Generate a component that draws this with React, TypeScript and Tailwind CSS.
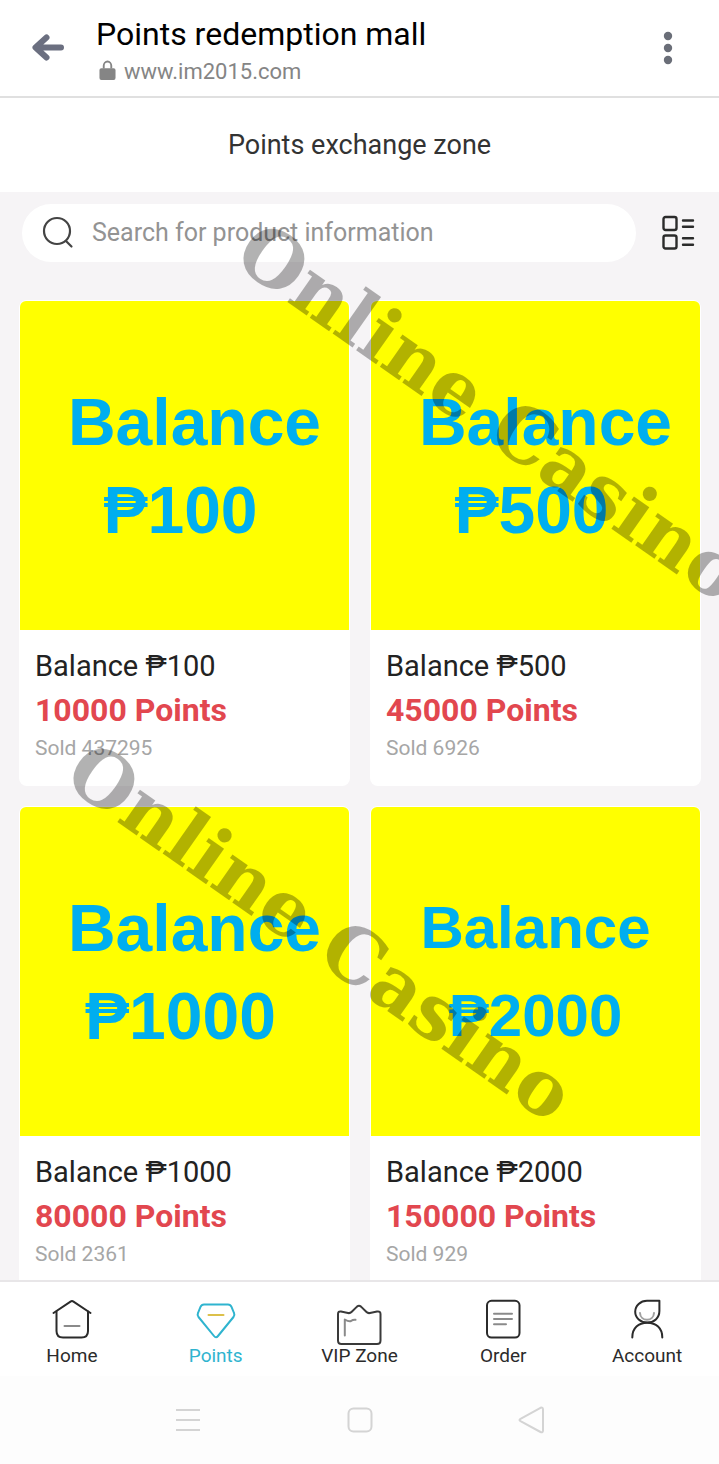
import React, { useState } from 'react';

type Product = {
  amount: string;
  points: number;
  sold: number;
  compact?: boolean;
};

const products: Product[] = [
  { amount: '₱100', points: 10000, sold: 437295 },
  { amount: '₱500', points: 45000, sold: 6926 },
  { amount: '₱1000', points: 80000, sold: 2361 },
  { amount: '₱2000', points: 150000, sold: 929, compact: true },
];

const HomeIcon = () => (
  <svg viewBox="0 0 48 48" className="size-12" fill="none" stroke="#2b2b2b" strokeWidth="2" strokeLinecap="round" strokeLinejoin="round">
    <path d="M5.5 15 L22.5 3.6 Q24 2.6 25.5 3.6 L42.5 15" />
    <path d="M8.5 13.5 V33 Q8.5 39.5 15 39.5 H33.5 Q40 39.5 40 33 V13.5" />
    <path d="M16.5 28 H31.5" stroke="#8a8a8a" />
  </svg>
);

const PointsIcon = () => (
  <svg viewBox="0 0 48 48" className="size-12" fill="none" stroke="#2fb4cf" strokeWidth="2" strokeLinecap="round" strokeLinejoin="round">
    <path d="M12 6.5 H36 Q38.5 6.5 39.5 8.8 L42 15 Q43 17 41.5 19 L26 38 Q24 40.5 22 38 L6.5 19 Q5 17 6 15 L8.5 8.8 Q9.5 6.5 12 6.5 Z" />
    <path d="M16.5 17 H31.5" stroke="#dcc04a" />
  </svg>
);

const VipIcon = () => (
  <svg viewBox="0 0 48 48" className="size-12" fill="none" stroke="#3a3a3a" strokeWidth="2" strokeLinecap="round" strokeLinejoin="round">
    <path d="M3 16 Q3 13 6 13.6 L13 15 Q15 15.5 16.5 14 L22 8.6 Q24 7 26 8.6 L31.5 14 Q33 15.5 35 15 L42 13.6 Q45.5 13 45.5 16 V42.5 Q45.5 46 42 46 H6.5 Q3 46 3 42.5 Z" />
    <path d="M9.8 37.5 V21.5 Q14 24 16 23 Q18 21.5 20.5 21.8" stroke="#8a8a8a" />
  </svg>
);

const OrderIcon = () => (
  <svg viewBox="0 0 48 48" className="size-12" fill="none" stroke="#2b2b2b" strokeWidth="2" strokeLinecap="round">
    <rect x="8" y="2.8" width="32.5" height="36.7" rx="4.5" />
    <path d="M15 15.7 H33 M15 21 H33 M15 26.2 H27" stroke="#8a8a8a" />
  </svg>
);

const AccountIcon = () => (
  <svg viewBox="0 0 48 48" className="size-12" fill="none" stroke="#2b2b2b" strokeWidth="2" strokeLinecap="round" strokeLinejoin="round">
    <path d="M24 2.8 H36.4 V13 C36.4 20 31 24.6 24.3 24.6 C17.5 24.6 12.2 20 12.2 13.8 C12.2 7.5 17.5 2.8 24 2.8 Z" />
    <path d="M17 15 C17.5 24 30.5 24 31 15" stroke="#a0a0a0" />
    <path d="M9.3 39.5 C9.3 30 15.5 24.8 24.3 24.8 C33 24.8 39.3 30 39.3 39.5" />
  </svg>
);

const tabs = [
  { label: 'Home', Icon: HomeIcon },
  { label: 'Points', Icon: PointsIcon },
  { label: 'VIP Zone', Icon: VipIcon },
  { label: 'Order', Icon: OrderIcon },
  { label: 'Account', Icon: AccountIcon },
];

const ProductCard = ({ product }: { product: Product }) => (
  <article className="bg-white rounded-lg p-px pb-6">
    {product.compact ? (
      <div className="aspect-square bg-[#ffff00] rounded-t-md flex flex-col items-center justify-center text-[#00aeef] font-bold font-['Liberation_Sans',Arial,sans-serif] text-[60px] leading-[88px]">
        <span>Balance</span>
        <span>{product.amount}</span>
      </div>
    ) : (
      <div className="aspect-square bg-[#ffff00] rounded-t-md flex flex-col items-center justify-center pr-2 text-[#00aeef] font-bold font-['Liberation_Sans',Arial,sans-serif] text-[66px] leading-[88px]">
        <span className="pl-7">Balance</span>
        <span>{product.amount}</span>
      </div>
    )}
    <div className="px-[15px] pt-4">
      <h2 className="text-[29px] leading-10 text-[#222]">Balance {product.amount}</h2>
      <p className="text-[32px] leading-[48px] font-bold text-[#e2474f]">{product.points} Points</p>
      <p className="text-[21px] leading-7 text-[#a6a6a6]">Sold {product.sold}</p>
    </div>
  </article>
);

const App = () => {
  const [query, setQuery] = useState('');
  const [active, setActive] = useState('Points');

  return (
    <div className="relative h-screen flex flex-col overflow-hidden bg-[#f6f4f6] font-[Roboto,sans-serif]">
      {/* Browser bar */}
      <header className="shrink-0 flex items-center bg-white border-b-2 border-[#e0e0e0] pl-7 pr-[31px] py-[10px]">
        <button aria-label="Back" className="w-[68px] shrink-0">
          <svg viewBox="0 0 40 40" className="size-10" fill="none" stroke="#6b6f80" strokeWidth="6" strokeLinecap="round" strokeLinejoin="round">
            <path d="M18.5 9.5 L7.5 19.5 L18.5 29.5 M8.5 19.5 H33" />
          </svg>
        </button>
        <div className="flex-1 min-w-0">
          <h1 className="text-[32px] leading-[48px] text-black">Points redemption mall</h1>
          <div className="flex items-center gap-2 pl-[3px] text-[22px] leading-7 text-[#858585]">
            <svg viewBox="0 0 18 22" className="w-[17px] h-[21px] mb-1">
              <path d="M5 9 V6 A4 4.5 0 0 1 13 6 V9" fill="none" stroke="#858585" strokeWidth="2" />
              <rect x="0.5" y="8.5" width="17" height="12.5" rx="2" fill="#858585" />
            </svg>
            <span>www.im2015.com</span>
          </div>
        </div>
        <button aria-label="More" className="w-10 flex justify-center">
          <svg viewBox="0 0 12 36" className="w-3 h-9" fill="#6a6e78">
            <circle cx="6" cy="6" r="4.2" />
            <circle cx="6" cy="18" r="4.2" />
            <circle cx="6" cy="30" r="4.2" />
          </svg>
        </button>
      </header>

      <div className="shrink-0 bg-white py-6 text-center text-[27px] leading-[46px] text-[#333]">Points exchange zone</div>

      <main className="flex-1 min-h-0 overflow-hidden">
        <div className="flex items-center gap-6 pl-[22px] pr-[23px] pt-3">
          <label className="flex-1 h-[58px] flex items-center gap-4 bg-white rounded-full pl-5">
            <svg viewBox="0 0 34 34" className="w-[34px] h-[34px]" fill="none" stroke="#444" strokeWidth="2.2" strokeLinecap="round">
              <circle cx="15" cy="15" r="13" />
              <path d="M24 25 L29.5 30.5" />
            </svg>
            <input
              value={query}
              onChange={(e) => setQuery(e.target.value)}
              placeholder="Search for product information"
              aria-label="Search for product information"
              className="flex-1 min-w-0 text-[25px] leading-8 text-[#333] outline-none placeholder:text-[#939393]"
            />
          </label>
          <button aria-label="List view">
            <svg viewBox="0 0 36 40" className="w-9 h-10" fill="none" stroke="#2b2b2b" strokeWidth="2.4" strokeLinecap="round">
              <rect x="3.5" y="4" width="13" height="13" rx="2" />
              <rect x="3.5" y="22.5" width="13" height="13" rx="2" />
              <path d="M23 7.5 H33 M23 13.8 H33 M23 25.2 H33 M23 31.8 H33" />
            </svg>
          </button>
        </div>

        <div className="grid grid-cols-2 gap-5 pl-[19px] pr-[18px] pt-[38px]">
          {products.map((product) => (
            <ProductCard key={product.amount} product={product} />
          ))}
        </div>
      </main>

      <nav className="shrink-0 grid grid-cols-5 bg-white border-t-2 border-[#e8e6e8] pt-4 pb-[10px]">
        {tabs.map(({ label, Icon }) => (
          <button key={label} onClick={() => setActive(label)} className="flex flex-col items-center">
            <Icon />
            <span className={label === active ? 'text-[19px] leading-5 text-[#2fb4cf]' : 'text-[19px] leading-5 text-[#2b2b2b]'}>
              {label}
            </span>
          </button>
        ))}
      </nav>

      {/* Android system keys */}
      <div className="shrink-0 h-[88px] flex items-center justify-center gap-[132px] bg-[#fdfdfd]">
        <button aria-label="Recent apps">
          <svg viewBox="0 0 40 40" className="size-10" stroke="#d4d4d4" strokeWidth="2">
            <path d="M8 10 H32 M8 20 H32 M8 30 H32" />
          </svg>
        </button>
        <button aria-label="Home screen">
          <svg viewBox="0 0 40 40" className="size-10" fill="none" stroke="#d4d4d4" strokeWidth="2">
            <rect x="8.5" y="8.5" width="23" height="23" rx="5" />
          </svg>
        </button>
        <button aria-label="System back">
          <svg viewBox="0 0 40 40" className="size-10" fill="none" stroke="#d4d4d4" strokeWidth="2" strokeLinejoin="round">
            <path d="M8.5 18.8 L28.5 7.8 Q31 7 31 9.5 V30.5 Q31 33 28.5 32 L8.5 21.2 Q6.5 20 8.5 18.8 Z" />
          </svg>
        </button>
      </div>

      {/* Watermarks */}
      <div aria-hidden="true" className="absolute inset-0 overflow-hidden pointer-events-none whitespace-nowrap font-bold font-['DejaVu_Serif',serif] text-[76px] leading-[98px] text-black/30">
        <span className="absolute left-[274px] top-[201px] origin-top-left rotate-[35deg]">Online Casino</span>
        <span className="absolute left-[104px] top-[721px] origin-top-left rotate-[35deg]">Online Casino</span>
      </div>
    </div>
  );
};

export default App;
